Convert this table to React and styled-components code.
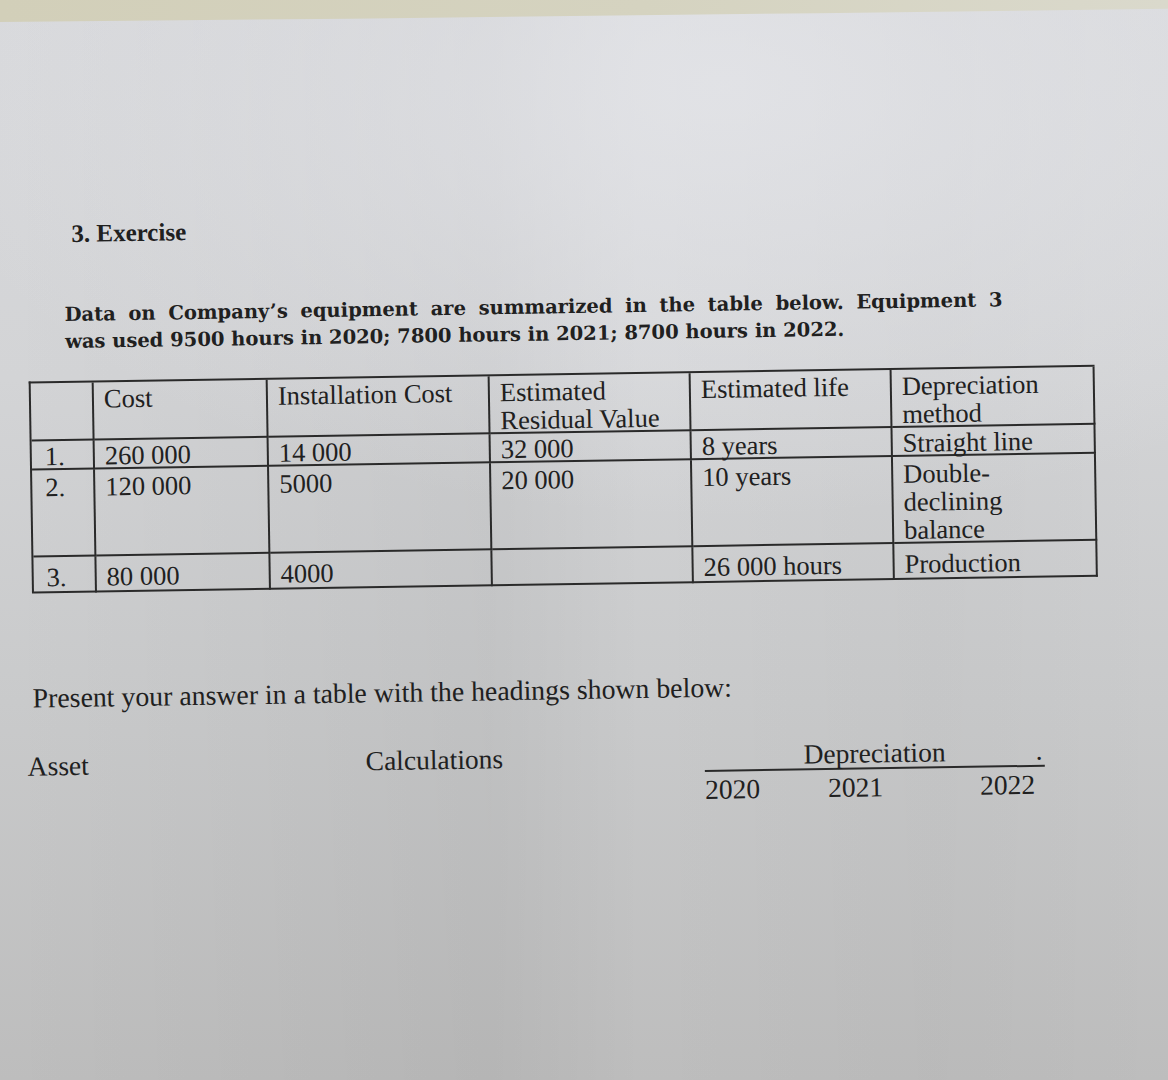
import React from "react";
import styled, { createGlobalStyle } from "styled-components";

const GlobalStyle = createGlobalStyle`
  html, body {
    margin: 0;
    padding: 0;
  }
  body {
    overflow: hidden;
    background: #cfd0d2;
    font-family: "Liberation Serif", "Times New Roman", serif;
    color: #202020;
  }
`;

const Page = styled.div`
  height: 1080px;
  overflow: hidden;
  background:
    radial-gradient(ellipse 70% 40% at 62% 8%, rgba(228, 229, 233, 0.8), rgba(228, 229, 233, 0) 100%),
    linear-gradient(90deg, rgba(0,0,0,0) 0%, rgba(0,0,0,0.03) 32%, rgba(0,0,0,0.045) 42%, rgba(0,0,0,0) 55%, rgba(0,0,0,0.02) 80%, rgba(0,0,0,0) 100%),
    linear-gradient(180deg, #d8d9dc 0%, #d3d4d6 35%, #c9cacb 65%, #bdbdbd 100%);
`;

const TopEdge = styled.div`
  height: 22px;
  background: linear-gradient(90deg, #d2cfb9 0%, #d5d3c0 55%, #dad9cc 100%);
  clip-path: polygon(0 0, 100% 0, 100% 40%, 70% 60%, 30% 85%, 0 100%);
`;

const Sheet = styled.div`
  transform: rotate(-0.9deg);
  transform-origin: 0 0;
  padding-top: 199px;
  color: #202020;
`;

const Title = styled.h3`
  margin: 0 0 0 68px;
  font-family: "Liberation Serif", "Times New Roman", serif;
  font-weight: bold;
  font-size: 25px;
  line-height: 28px;
`;

const Intro = styled.div`
  margin: 53px 0 0 60px;
  width: 938px;
  font-family: "DejaVu Serif", "Liberation Serif", serif;
  font-weight: bold;
  font-size: 19.5px;
  line-height: 27px;
`;

const IntroLine = styled.div`
  text-align: ${(p) => (p.$justify ? "justify" : "left")};
  text-align-last: ${(p) => (p.$justify ? "justify" : "left")};
`;

const Table = styled.div`
  margin: 26px 0 0 23px;
  display: grid;
  width: max-content;
  grid-template-columns: 63px 174px 222px 201px 201px 203px;
  grid-template-rows: 58px 29px 87px 36px;
  border-top: 2px solid #2a2a2a;
  border-left: 2px solid #2a2a2a;
`;

const Cell = styled.div`
  box-sizing: border-box;
  border-right: 2px solid #2a2a2a;
  border-bottom: 2px solid #2a2a2a;
  padding: ${(p) => p.$pt}px 4px 0 ${(p) => p.$pl || 9}px;
  font-size: 26.5px;
  line-height: ${(p) => p.$lh}px;
  white-space: nowrap;
  overflow: visible;
`;

const Present = styled.p`
  margin: 90px 0 0 22px;
  font-size: 27.8px;
  line-height: 30px;
`;

const Headings = styled.div`
  display: flex;
  align-items: flex-start;
  margin: 39px 0 0 16px;
  font-size: 27.5px;
  line-height: 28px;
`;

const Heading = styled.div`
  width: ${(p) => p.$w}px;
`;

const DepBlock = styled.div`
  width: 340px;
`;

const DepTitle = styled.div`
  display: grid;
  grid-template-columns: 1fr auto 1fr;
  border-bottom: 2px solid #2a2a2a;
`;

const Dot = styled.span`
  text-align: right;
  padding-right: 2px;
`;

const Years = styled.div`
  display: grid;
  grid-template-columns: 123px 152px auto;
  padding-top: 4px;
`;

const rows = [
  {
    pt: 2,
    lh: 28,
    cells: ["", "Cost", "Installation Cost", ["Estimated", "Residual Value"], "Estimated life", ["Depreciation", "method"]],
  },
  { pt: 2, lh: 27, cells: ["1.", "260 000", "14 000", "32 000", "8 years", "Straight line"] },
  { pt: 3, lh: 28, cells: ["2.", "120 000", "5000", "20 000", "10 years", ["Double-", "declining", "balance"]] },
  { pt: 6, lh: 28, cells: ["3.", "80 000", "4000", "", "26 000 hours", "Production"] },
];

function renderContent(c) {
  if (Array.isArray(c)) {
    return c.map((line, i) => (
      <React.Fragment key={i}>
        {i > 0 && <br />}
        {line}
      </React.Fragment>
    ));
  }
  return c;
}

export default function App() {
  return (
    <>
      <GlobalStyle />
      <Page>
        <TopEdge />
        <Sheet>
          <Title>3. Exercise</Title>
          <Intro>
            <IntroLine $justify>
              Data on Company’s equipment are summarized in the table below. Equipment 3
            </IntroLine>
            <IntroLine>was used 9500 hours in 2020; 7800 hours in 2021; 8700 hours in 2022.</IntroLine>
          </Intro>
          <Table>
            {rows.map((row, ri) =>
              row.cells.map((c, ci) => (
                <Cell key={`${ri}-${ci}`} $pt={row.pt} $lh={row.lh} $pl={ci === 0 ? 13 : 10}>
                  {renderContent(c)}
                </Cell>
              ))
            )}
          </Table>
          <Present>Present your answer in a table with the headings shown below:</Present>
          <Headings>
            <Heading $w={338}>Asset</Heading>
            <Heading $w={339}>Calculations</Heading>
            <DepBlock>
              <DepTitle>
                <span />
                <span>Depreciation</span>
                <Dot>.</Dot>
              </DepTitle>
              <Years>
                <span>2020</span>
                <span>2021</span>
                <span>2022</span>
              </Years>
            </DepBlock>
          </Headings>
        </Sheet>
      </Page>
    </>
  );
}
